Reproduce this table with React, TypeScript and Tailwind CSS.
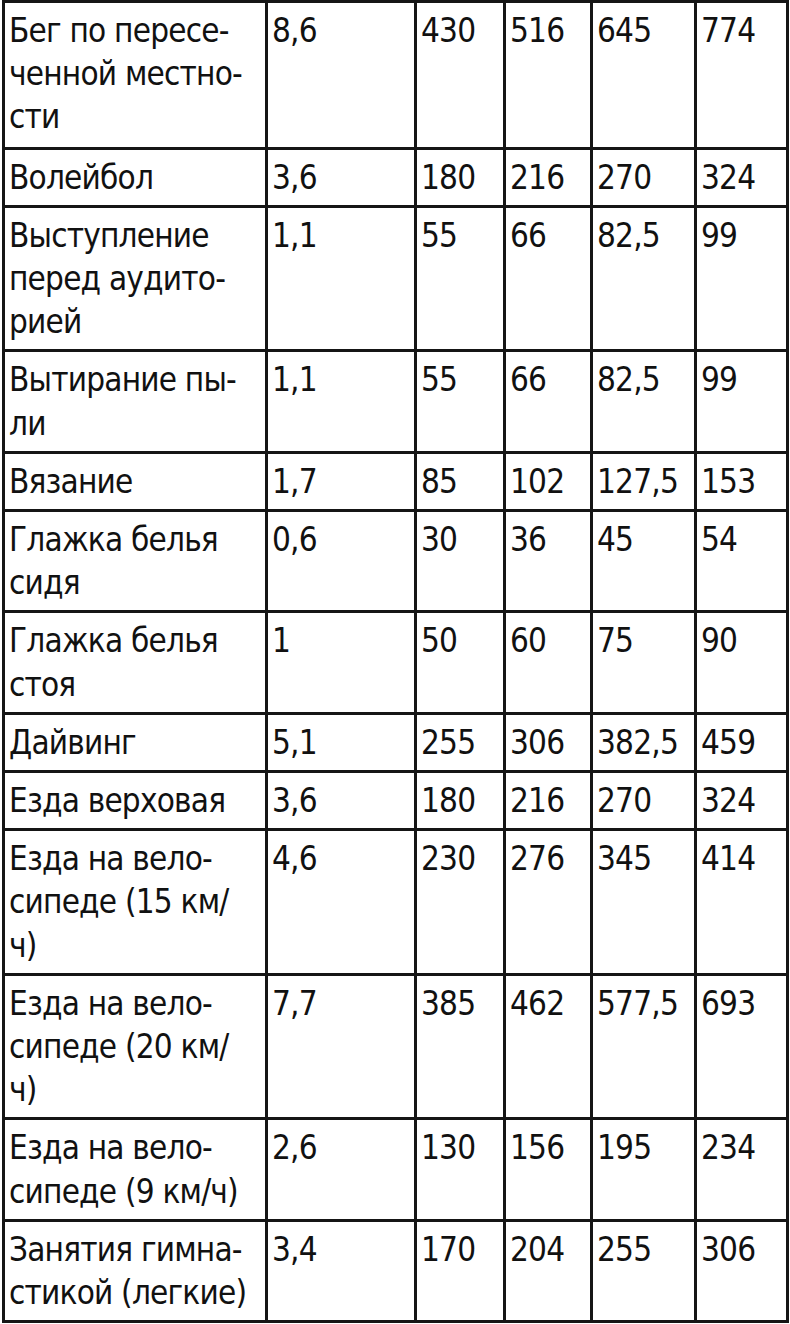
import React from "react";

type Row = { name: string[]; vals: string[]; extra?: boolean };

const rows: Row[] = [
  { name: ["Бег по пересе-", "ченной местно-", "сти"], vals: ["8,6", "430", "516", "645", "774"], extra: true },
  { name: ["Волейбол"], vals: ["3,6", "180", "216", "270", "324"] },
  { name: ["Выступление", "перед аудито-", "рией"], vals: ["1,1", "55", "66", "82,5", "99"] },
  { name: ["Вытирание пы-", "ли"], vals: ["1,1", "55", "66", "82,5", "99"] },
  { name: ["Вязание"], vals: ["1,7", "85", "102", "127,5", "153"] },
  { name: ["Глажка белья", "сидя"], vals: ["0,6", "30", "36", "45", "54"] },
  { name: ["Глажка белья", "стоя"], vals: ["1", "50", "60", "75", "90"] },
  { name: ["Дайвинг"], vals: ["5,1", "255", "306", "382,5", "459"] },
  { name: ["Езда верховая"], vals: ["3,6", "180", "216", "270", "324"] },
  { name: ["Езда на вело-", "сипеде (15 км/", "ч)"], vals: ["4,6", "230", "276", "345", "414"] },
  { name: ["Езда на вело-", "сипеде (20 км/", "ч)"], vals: ["7,7", "385", "462", "577,5", "693"] },
  { name: ["Езда на вело-", "сипеде (9 км/ч)"], vals: ["2,6", "130", "156", "195", "234"] },
  { name: ["Занятия гимна-", "стикой (легкие)"], vals: ["3,4", "170", "204", "255", "306"] },
];

export default function App() {
  return (
    <div className="bg-white w-[790px] h-[1324px] overflow-hidden">
      <div
        className="ml-[2px] w-[787px] grid grid-cols-[263px_149px_89px_87px_104px_92px] border-l-[3px] border-t-[3px] border-[#151515] text-[#111] text-[33px] leading-[43.2px] tracking-[-0.8px]"
        style={{ fontFamily: '"DejaVu Sans Condensed", "DejaVu Sans", sans-serif', fontStretch: "condensed" }}
      >
        {rows.map((r, i) => (
          <React.Fragment key={i}>
            <div className={`border-r-[3px] border-b-[3px] border-[#151515] pl-[4px] pt-[6px] ${r.extra ? "pb-[8px]" : "pb-[6px]"} whitespace-nowrap`}>
              {r.name.map((l, j) => (
                <div key={j}>{l}</div>
              ))}
            </div>
            {r.vals.map((v, j) => (
              <div key={j} className="border-r-[3px] border-b-[3px] border-[#151515] pl-[4px] pt-[6px] whitespace-nowrap">
                {v}
              </div>
            ))}
          </React.Fragment>
        ))}
      </div>
    </div>
  );
}
